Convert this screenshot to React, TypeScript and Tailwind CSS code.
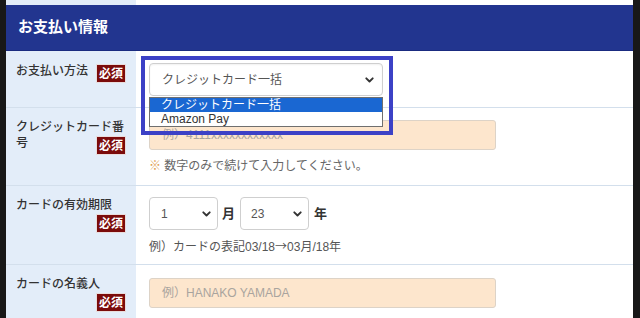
import React from "react";

const FONT = "font-['Liberation_Sans','Noto_Sans_CJK_JP',sans-serif]";

function Badge() {
  return (
    <span className="float-right mt-[1px] flex h-[19px] w-[30px] items-center justify-center border border-[#e9dcdc] bg-[#7b0b0b] text-[12px] font-bold leading-none text-white">
      必須
    </span>
  );
}

function Chevron({ className = "" }: { className?: string }) {
  return (
    <svg className={className} width="9" height="6" viewBox="0 0 9 6" fill="none">
      <path d="M1.3 1.3 L4.5 4.5 L7.7 1.3" stroke="#333" strokeWidth="1.9" strokeLinecap="round" strokeLinejoin="round" />
    </svg>
  );
}

function Label({ text, pt = "pt-[11px]" }: { text: string; pt?: string }) {
  return (
    <div className={`w-[130px] shrink-0 bg-[#e3edf9] px-[10px] ${pt} text-[12px] font-medium leading-[16px] text-[#333]`}>
      {text}
      <Badge />
    </div>
  );
}

export default function App() {
  return (
    <div className={`h-[318px] w-[640px] overflow-hidden bg-[#181818] pl-[6px] pr-[7px] ${FONT}`}>
      <div className="flex h-full flex-col overflow-hidden bg-white">
        <div className="flex h-[5px] shrink-0">
          <div className="w-[130px] bg-[#e3edf9]" />
          <div className="flex-1 bg-white" />
        </div>
        <div className="flex h-[46px] shrink-0 items-center border-b border-[#1a2b80] bg-[#22358f] pl-[12px] text-[15px] font-bold text-white">
          お支払い情報
        </div>

        {/* Row 1 */}
        <div className="flex h-[57px] shrink-0 border-b border-[#d3dfec]">
          <Label text="お支払い方法" pt="pt-[12px]" />
          <div className="relative z-10 flex-1 pl-[13px] pt-[12px]">
            <div className="flex h-[33px] w-[234px] items-center justify-between rounded-[4px] border border-[#cfcfcf] bg-white pl-[12px] pr-[8px] text-[12px] text-[#555] shadow-[inset_0_1px_2px_rgba(0,0,0,0.06)]">
              <span>クレジットカード一括</span>
              <Chevron />
            </div>
            <div className="absolute left-[13px] top-[46px] w-[234px] border border-[#6f6f6f] bg-white text-[12px] leading-[14px]">
              <div className="bg-[#1a67d2] pl-[11px] text-white">クレジットカード一括</div>
              <div className="pl-[11px] text-[#333]">Amazon Pay</div>
            </div>
            <div className="pointer-events-none absolute left-[5px] top-[5px] h-[79px] w-[252px] border-4 border-[#3c41c6]" />
          </div>
        </div>

        {/* Row 2 */}
        <div className="flex h-[78px] shrink-0 border-b border-[#d3dfec]">
          <div className="w-[130px] shrink-0 bg-[#e3edf9] px-[10px] pt-[11px] text-[12px] font-medium leading-[16px] text-[#333]">
            <div>クレジットカード番</div>
            <div>
              <span>号</span>
              <Badge />
            </div>
          </div>
          <div className="flex-1 pl-[13px] pt-[12px]">
            <div className="flex h-[30px] w-[347px] items-center rounded-[3px] border border-[#ddd3c7] bg-[#fde6cd] pl-[12px] text-[12px] text-[#a9a49e]">
              例）4111xxxxxxxxxxxx
            </div>
            <div className="mt-[8px] text-[12px] leading-[16px] text-[#666]">
              <span className="text-[#e0a050]">※</span> 数字のみで続けて入力してください。
            </div>
          </div>
        </div>

        {/* Row 3 */}
        <div className="flex h-[79px] shrink-0 border-b border-[#d3dfec]">
          <Label text="カードの有効期限" />
          <div className="flex-1 pl-[13px] pt-[11px]">
            <div className="flex items-center">
              <div className="flex h-[33px] w-[69px] items-center justify-between rounded-[4px] border border-[#cfcfcf] bg-white pl-[11px] pr-[6px] text-[12px] text-[#555]">
                <span>1</span>
                <Chevron />
              </div>
              <span className="ml-[4px] mr-[5px] text-[13px] font-bold text-[#333]">月</span>
              <div className="flex h-[33px] w-[69px] items-center justify-between rounded-[4px] border border-[#cfcfcf] bg-white pl-[10px] pr-[6px] text-[12px] text-[#555]">
                <span>23</span>
                <Chevron />
              </div>
              <span className="ml-[5px] text-[13px] font-bold text-[#333]">年</span>
            </div>
            <div className="mt-[8px] text-[12px] leading-[16px] text-[#555]">
              例）カードの表記03/18<span className="font-['Noto_Sans_CJK_JP',sans-serif]">→</span>03月/18年
            </div>
          </div>
        </div>

        {/* Row 4 */}
        <div className="flex flex-1">
          <Label text="カードの名義人" />
          <div className="flex-1 pl-[13px] pt-[13px]">
            <div className="flex h-[30px] w-[347px] items-center rounded-[3px] border border-[#ddd3c7] bg-[#fde6cd] pl-[12px] text-[12px] text-[#a9a49e]">
              例）HANAKO YAMADA
            </div>
          </div>
        </div>
      </div>
    </div>
  );
}
